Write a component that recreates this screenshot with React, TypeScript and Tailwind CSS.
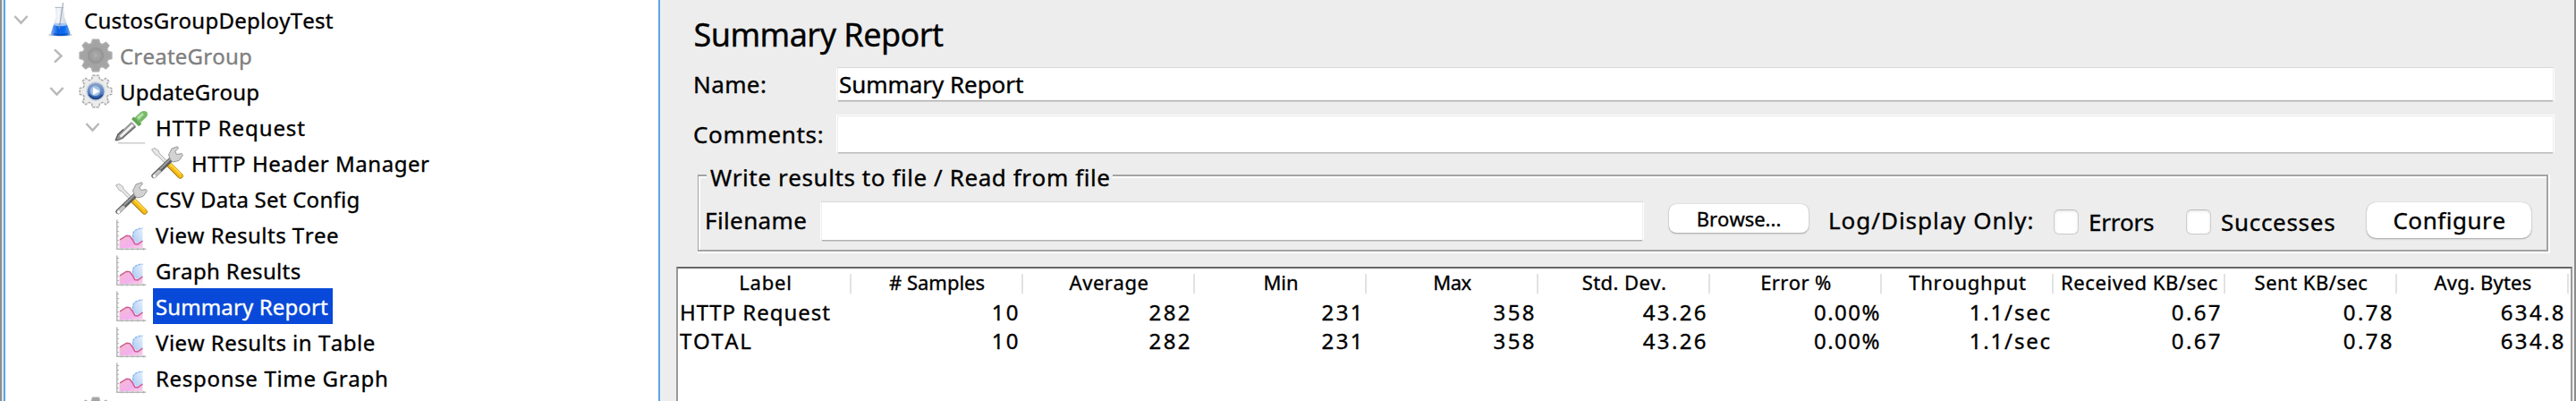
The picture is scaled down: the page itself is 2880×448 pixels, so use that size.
import React from "react";

function Flask() {
  return (
    <svg className="block h-[40px] w-[32px]" viewBox="0 0 32 40">
      <defs>
        <linearGradient id="flaskLiquid" x1="0" x2="1" y1="0" y2="0">
          <stop offset="0" stopColor="#7db0f0" />
          <stop offset="0.35" stopColor="#0b62e6" />
          <stop offset="0.7" stopColor="#0a6cf0" />
          <stop offset="1" stopColor="#6aa2ea" />
        </linearGradient>
        <linearGradient id="flaskGlass" x1="0" x2="1" y1="0" y2="0">
          <stop offset="0" stopColor="#c3c9d6" />
          <stop offset="0.4" stopColor="#f3f6fb" />
          <stop offset="1" stopColor="#aab4c8" />
        </linearGradient>
      </defs>
      <ellipse cx="15.5" cy="37" rx="13.5" ry="1.4" fill="#9a9a9a" opacity="0.7" />
      <path d="M10 6 L19 6 L20 17 L26.5 35 Q27 38 23 38 L8 38 Q4 38 4.8 35 L10.5 17 Z" fill="url(#flaskGlass)" opacity="0.85" />
      <path d="M8 25.5 L23 25.5 L26.2 34.5 Q26.5 37.8 23 38 L8 38 Q4.6 37.8 5.2 34.5 Z" fill="url(#flaskLiquid)" />
      <ellipse cx="15.5" cy="25.5" rx="7.6" ry="1.8" fill="#9cc4f5" />
      <path d="M8 35.5 Q15 38.5 24 35.5" stroke="#0d3fa0" strokeWidth="1.4" fill="none" opacity="0.6" />
      <path d="M18.5 1 L14.2 30" stroke="#8d95a5" strokeWidth="1.3" opacity="0.75" />
      <path d="M9.5 6.4 L19.5 6.4" stroke="#b7bdc9" strokeWidth="1.2" />
    </svg>
  );
}

const GEAR =
  "M15.6 1.2 L22.4 1.2 L23.6 5.6 L26.6 6.8 L30.4 4.4 L33.8 7.8 L31.4 11.6 L32.6 14.4 L36.8 15.6 L36.8 22.4 L32.6 23.6 L31.4 26.4 L33.8 30.4 L30.4 33.8 L26.6 31.4 L23.6 32.6 L22.4 36.8 L15.6 36.8 L14.4 32.6 L11.6 31.4 L7.6 33.8 L4.2 30.4 L6.6 26.4 L5.4 23.6 L1.2 22.4 L1.2 15.6 L5.4 14.4 L6.6 11.6 L4.2 7.8 L7.6 4.4 L11.6 6.8 L14.4 5.6 Z";

function GearOff() {
  return (
    <svg className="block size-[38px]" viewBox="0 0 38 38">
      <path d={GEAR} fill="#a4a4a4" stroke="#adadad" strokeWidth="1.6" strokeLinejoin="round" />
      <circle cx="19" cy="19" r="9.3" fill="#989898" />
      <circle cx="19" cy="19" r="6" fill="#a2a2a2" />
      <path d="M17 15.5 L22.5 19 L17 22.5 Z" fill="#acacac" />
    </svg>
  );
}

function GearOn() {
  return (
    <svg className="block size-[38px]" viewBox="0 0 38 38">
      <defs>
        <linearGradient id="gearBall" x1="0" x2="0" y1="0" y2="1">
          <stop offset="0" stopColor="#8fa6c8" />
          <stop offset="0.5" stopColor="#5f88c4" />
          <stop offset="1" stopColor="#2b5ca8" />
        </linearGradient>
      </defs>
      <path d={GEAR} fill="#ececec" stroke="#a9a9a9" strokeWidth="1.5" strokeLinejoin="round" strokeDasharray="3 1.2" />
      <circle cx="19" cy="19" r="11" fill="#d3d9e2" />
      <circle cx="19" cy="19" r="9.5" fill="url(#gearBall)" />
      <circle cx="18.5" cy="18.5" r="5.6" fill="#a9c3e6" />
      <path d="M16 14.5 L23.5 19 L16 23 Z" fill="#ffffff" />
      <path d="M11.5 23 Q19 31 26.5 23" stroke="#1e3f80" strokeWidth="1.4" fill="none" />
    </svg>
  );
}

function Dropper() {
  return (
    <svg className="block size-[38px]" viewBox="0 0 38 38">
      <path d="M4 36.8 L34 36.8" stroke="#cfcfcf" strokeWidth="1.6" />
      <path d="M1 34 L4 27 L19 13 L24 18 L9 31.5 L3 34.6 Z" fill="#9a9a9a" />
      <path d="M5.5 29 L19.5 15.5 L21.5 17.5 L7.5 30.5 Z" fill="#f4f4f4" />
      <path d="M1 34 L4 27 L10 21.5" stroke="#585858" strokeWidth="1.3" fill="none" />
      <path d="M2 34 L8.5 31.8 L23.5 18.5" stroke="#666666" strokeWidth="1.3" fill="none" />
      <path d="M19 10 L27 18 L30 16 L29 13 L21.5 7.5 Z" fill="#62a454" />
      <path d="M22.5 8.5 L29.5 2 Q33 0 36.2 2 Q38 5 35.5 8 L28.6 14.6 Z" fill="#76bb66" />
      <path d="M25 8 L31 3 L33 5 L27 11 Z" fill="#b2e0a6" />
    </svg>
  );
}

function Tools() {
  return (
    <svg className="block size-[38px]" viewBox="0 0 38 38">
      <path d="M20.5 20.5 L33.6 33.6" stroke="#a8821c" strokeWidth="6.4" strokeLinecap="round" />
      <path d="M20.8 20 L33.8 33.2" stroke="#f6bd12" strokeWidth="4.8" strokeLinecap="round" />
      <path d="M22 20 L33.5 31" stroke="#ffd95a" strokeWidth="1.4" strokeLinecap="round" />
      <path d="M1.5 4 L5 2.5 L9.5 5.5 L10 8 L20.5 18.5 L18 21 L8 10.5 L5.5 9.8 Z" fill="#e6e6e6" stroke="#b0b0b0" strokeWidth="1" />
      <path d="M4 33.5 L27 11.5" stroke="#5e5e5e" strokeWidth="5.4" strokeLinecap="round" />
      <path d="M4.5 33.5 L10 28.5" stroke="#c4c4c4" strokeWidth="4" strokeLinecap="round" />
      <path d="M11 26 L24 13" stroke="#9c9c9c" strokeWidth="2" />
      <path d="M22.5 15.5 L20.5 10 L24 3 L30.5 0.8 L31.5 2.6 L27.8 6 L29.5 9.5 L35.2 8.6 L36.4 10.4 L32 16.5 L25.5 18 Z" fill="#d2d2d2" stroke="#979797" strokeWidth="1" />
      <circle cx="4.6" cy="34" r="1.7" fill="#ffffff" />
    </svg>
  );
}

function Chart() {
  return (
    <svg className="block size-[38px]" viewBox="0 0 38 38">
      <defs>
        <linearGradient id="chartBlue" x1="0" x2="1" y1="1" y2="0">
          <stop offset="0" stopColor="#a9c8f2" />
          <stop offset="1" stopColor="#e6f0fd" />
        </linearGradient>
        <linearGradient id="chartPink" x1="0" x2="1" y1="0" y2="1">
          <stop offset="0" stopColor="#f7bccb" />
          <stop offset="0.6" stopColor="#f3b0ee" />
          <stop offset="1" stopColor="#f9cfe6" />
        </linearGradient>
      </defs>
      <path d="M20 24 Q19 12 31.5 12 L31.5 27 L25 29 Z" fill="url(#chartBlue)" />
      <path d="M20.6 22 Q19.5 12.5 31.5 12.2" stroke="#8db8f0" strokeWidth="1.5" fill="none" strokeDasharray="3 1" />
      <path d="M5.5 25 L14 20 L20 23 L24 29 L31.5 27 L31.5 34 L5.5 34 Z" fill="url(#chartPink)" />
      <path d="M6 24.8 L13.5 20.2 L17 20.6 L20 24.5 L22.8 29.5 L26 30 L31.5 26" stroke="#cc5a8f" strokeWidth="1.5" fill="none" />
      <path d="M2.8 2.5 L2.8 35.2 L35 35.2" stroke="#b5b5b5" strokeWidth="1.5" fill="none" />
      <path d="M3 5.5 H5 M3 10.5 H5 M3 15.5 H5 M3 20.5 H5 M3 25.5 H5 M3 30.5 H5 M8 34 V36.5 M14 34 V36.5 M20 34 V36.5 M26 34 V36.5 M32.5 34 V36.5" stroke="#b5b5b5" strokeWidth="1.1" />
    </svg>
  );
}

function Chevron({ open }: { open: boolean }) {
  return open ? (
    <svg className="ml-px block h-[12px] w-[17px]" viewBox="0 0 17 12">
      <path d="M1.4 2 L8.5 9.6 L15.6 2" stroke="#b9b9b9" strokeWidth="2.5" fill="none" />
    </svg>
  ) : (
    <svg className="ml-[5px] block h-[17px] w-[12px]" viewBox="0 0 12 17">
      <path d="M2 1.4 L9.6 8.5 L2 15.6" stroke="#b9b9b9" strokeWidth="2.5" fill="none" />
    </svg>
  );
}

type Node = {
  text: string;
  tracking: string;
  pad: string;
  arrow?: "open" | "closed";
  icon: React.ReactNode;
  iconBox: string;
  muted?: boolean;
  selected?: boolean;
};

const TREE: Node[] = [
  { text: "CustosGroupDeployTest", tracking: "tracking-[0.25px]", pad: "pl-[8px]", arrow: "open", icon: <Flask />, iconBox: "w-[38px] pl-[4px]" },
  { text: "CreateGroup", tracking: "tracking-[0.2px]", pad: "pl-[48px]", arrow: "closed", icon: <GearOff />, iconBox: "w-[38px]", muted: true },
  { text: "UpdateGroup", tracking: "tracking-[0.17px]", pad: "pl-[48px]", arrow: "open", icon: <GearOn />, iconBox: "w-[38px]" },
  { text: "HTTP Request", tracking: "tracking-[0.9px]", pad: "pl-[88px]", arrow: "open", icon: <Dropper />, iconBox: "w-[38px]" },
  { text: "HTTP Header Manager", tracking: "tracking-[0.54px]", pad: "pl-[128px]", icon: <Tools />, iconBox: "w-[38px]" },
  { text: "CSV Data Set Config", tracking: "tracking-[0.25px]", pad: "pl-[88px]", icon: <Tools />, iconBox: "w-[38px]" },
  { text: "View Results Tree", tracking: "tracking-[0.48px]", pad: "pl-[88px]", icon: <Chart />, iconBox: "w-[38px]" },
  { text: "Graph Results", tracking: "tracking-[0.36px]", pad: "pl-[88px]", icon: <Chart />, iconBox: "w-[38px]" },
  { text: "Summary Report", tracking: "tracking-[0.12px]", pad: "pl-[88px]", icon: <Chart />, iconBox: "w-[38px]", selected: true },
  { text: "View Results in Table", tracking: "tracking-[0.5px]", pad: "pl-[88px]", icon: <Chart />, iconBox: "w-[38px]" },
  { text: "Response Time Graph", tracking: "tracking-[0.68px]", pad: "pl-[88px]", icon: <Chart />, iconBox: "w-[38px]" },
  { text: "", tracking: "", pad: "pl-[48px]", icon: <GearOff />, iconBox: "w-[38px]" },
];

function TreeRow({ node }: { node: Node }) {
  return (
    <div className={`flex h-[40px] shrink-0 items-center ${node.pad}`}>
      <div className="flex w-[34px] shrink-0">
        {node.arrow && <Chevron open={node.arrow === "open"} />}
      </div>
      <div className={`shrink-0 ${node.iconBox}`}>{node.icon}</div>
      {node.text && (
        <div
          className={`ml-[5px] h-[40px] pt-px pl-[3px] text-[24px] leading-[40px] whitespace-nowrap ${node.tracking} ${
            node.selected ? "w-[201px] bg-[#0849d9] text-white" : node.muted ? "text-[#808080]" : "text-black"
          }`}
        >
          {node.text}
        </div>
      )}
    </div>
  );
}

function Field({ box, text, light }: { box: string; text?: string; light?: boolean }) {
  return (
    <div className={`flex flex-col ${box}`}>
      <div className={`h-px shrink-0 ${light ? "bg-white" : "mx-px bg-[#d9d9d9]"}`} />
      <div className="flex min-h-0 flex-1 border-x border-white px-px">
        <div className={`flex-1 bg-white pl-px text-[26px] leading-[36px] tracking-[-0.05px] whitespace-nowrap ${light ? "border-t border-[#e9e9e9]" : ""}`}>
          {text}
        </div>
      </div>
      <div className={`mx-[2px] h-px shrink-0 ${light ? "bg-[#bcbcbc]" : "bg-[#b0b0b0]"}`} />
      <div className="mx-[2px] h-px shrink-0 bg-[#d2d2d2]" />
    </div>
  );
}

function Check() {
  return (
    <div className="h-[28px] w-[28px] shrink-0 rounded-[6px] border border-[#cdcdcd] border-t-[#bdbdbd] bg-white shadow-[inset_0_1px_3px_rgba(0,0,0,0.12)]" />
  );
}

const HEADERS = [
  { text: "Label", cls: "tracking-[0.78px]" },
  { text: "# Samples", cls: "pr-px tracking-[0px]" },
  { text: "Average", cls: "tracking-[0.55px]" },
  { text: "Min", cls: "tracking-[0px]" },
  { text: "Max", cls: "pr-px tracking-[-0.4px]" },
  { text: "Std. Dev.", cls: "tracking-[0.43px]" },
  { text: "Error %", cls: "tracking-[0.4px]" },
  { text: "Throughput", cls: "tracking-[0.75px]" },
  { text: "Received KB/sec", cls: "tracking-[0.58px]" },
  { text: "Sent KB/sec", cls: "tracking-[0.5px]" },
  { text: "Avg. Bytes", cls: "tracking-[0.2px]" },
];

const CELLS = [
  { text: "10", cls: "pr-[3px] tracking-[2.4px]" },
  { text: "282", cls: "pr-[3px] tracking-[2.4px]" },
  { text: "231", cls: "pr-[2px] tracking-[2.4px]" },
  { text: "358", cls: "pr-[2px] tracking-[2.4px]" },
  { text: "43.26", cls: "pr-[2px] tracking-[2.4px]" },
  { text: "0.00%", cls: "pr-px tracking-[1.5px]" },
  { text: "1.1/sec", cls: "pr-[2px] tracking-[1.85px]" },
  { text: "0.67", cls: "pr-[3px] tracking-[2.4px]" },
  { text: "0.78", cls: "pr-[3px] tracking-[2.4px]" },
  { text: "634.8", cls: "pr-[3px] tracking-[2.4px]" },
];

const ROWS = [
  { label: "HTTP Request", cls: "tracking-[1.0px]" },
  { label: "TOTAL", cls: "tracking-[1.6px]" },
];

export default function App() {
  return (
    <div className="flex h-[448px] w-[2880px] overflow-hidden bg-[#ededed] font-['Noto_Sans',sans-serif] text-black [-webkit-text-stroke:0.35px_currentColor] [font-kerning:none]">
      <div className="w-[2px] shrink-0 bg-[#8f8f8f]" />
      <div className="w-[2px] shrink-0 bg-[#e4e4e4]" />
      <div className="flex w-[734px] shrink-0 flex-col border-x-2 border-[#5aa6e8] bg-white pt-[2px]">
        {TREE.map((node, i) => (
          <TreeRow key={i} node={node} />
        ))}
      </div>

      <div className="flex w-[2140px] shrink-0 flex-col pt-[19px]">
        <h1 className="h-[40px] shrink-0 pl-[37.5px] text-[36px] leading-[40px] font-normal tracking-[-0.54px] whitespace-nowrap">
          Summary Report
        </h1>

        <div className="mt-[16px] flex h-[39px] shrink-0 items-stretch pl-[37px]">
          <div className="w-[160px] pt-px text-[26px] leading-[36px] tracking-[0.4px]">Name:</div>
          <Field box="w-[1921px]" text="Summary Report" />
        </div>
        <div className="mt-[14px] flex h-[44px] shrink-0 items-stretch pl-[37px]">
          <div className="w-[160px] pt-[4px] text-[26px] leading-[36px] tracking-[0.67px]">Comments:</div>
          <Field box="w-[1921px]" light />
        </div>

        <div className="relative mt-[23px] ml-[42px] h-[88px] w-[2071px] shrink-0 border-r-2 border-b-2 border-white">
          <div className="flex h-[86px] w-[2069px] items-start border-2 border-l border-[#a3a3a3] pt-[28px] pl-[7px] shadow-[inset_2px_2px_0_#ffffff]">
            <div className="w-[129px] shrink-0 pt-[3px] text-[26px] leading-[36px] tracking-[0.39px]">Filename</div>
            <Field box="h-[45px] w-[921px] shrink-0" />
            <button className="mt-[3px] ml-[28px] h-[32px] w-[156px] shrink-0 rounded-[8px] bg-white pb-px text-[22px] leading-[30px] shadow-[0_0_1px_rgba(0,0,0,0.3),0_1px_2px_rgba(0,0,0,0.3)]">
              Browse...
            </button>
            <div className="ml-[22px] w-[252px] shrink-0 pt-[3px] text-[26px] leading-[36px] tracking-[0.98px] whitespace-nowrap">
              Log/Display Only:
            </div>
            <label className="flex w-[148px] shrink-0 pt-[9px]">
              <Check />
              <span className="-mt-[4px] ml-[11px] text-[26px] leading-[36px] tracking-[-0.28px]">Errors</span>
            </label>
            <label className="flex w-[202px] shrink-0 pt-[9px]">
              <Check />
              <span className="-mt-[4px] ml-[11px] text-[26px] leading-[36px] tracking-[0.7px]">Successes</span>
            </label>
            <button className="mt-px h-[40px] w-[184px] shrink-0 rounded-[10px] bg-white pb-px pl-px text-[26px] leading-[36px] tracking-[0.54px] shadow-[0_0_1px_rgba(0,0,0,0.3),0_1px_2px_rgba(0,0,0,0.3)]">
              Configure
            </button>
          </div>
          <div className="absolute -top-[10px] left-[10px] h-[26px] w-[454px] bg-[#ededed] pl-[4px] text-[26px] leading-[26px] tracking-[0.58px] whitespace-nowrap">
            Write results to file / Read from file
          </div>
        </div>

        <div className="mt-[15px] ml-[18px] flex w-[2120px] flex-1 flex-col border-x-2 border-t-2 border-[#999999] border-t-[#666666] bg-white pl-[2px]">
          <div className="flex h-[33px] shrink-0">
            {HEADERS.map((h) => (
              <div key={h.text} className="flex w-[192px] shrink-0">
                <div className={`flex-1 text-center text-[22px] leading-[31px] whitespace-nowrap ${h.cls}`}>{h.text}</div>
                <div className="mt-[6px] -ml-[2px] h-[22px] w-[2px] shrink-0 bg-[#e2e2e2]" />
              </div>
            ))}
          </div>
          {ROWS.map((r) => (
            <div key={r.label} className="flex h-[32px] shrink-0 text-[24px] leading-[32px]">
              <div className={`w-[192px] shrink-0 whitespace-nowrap ${r.cls}`}>{r.label}</div>
              {CELLS.map((c) => (
                <div key={c.text} className={`w-[192px] shrink-0 text-right ${c.cls}`}>
                  {c.text}
                </div>
              ))}
            </div>
          ))}
        </div>
      </div>
      <div className="w-[2px] shrink-0 bg-[#8c8c8c]" />
    </div>
  );
}
